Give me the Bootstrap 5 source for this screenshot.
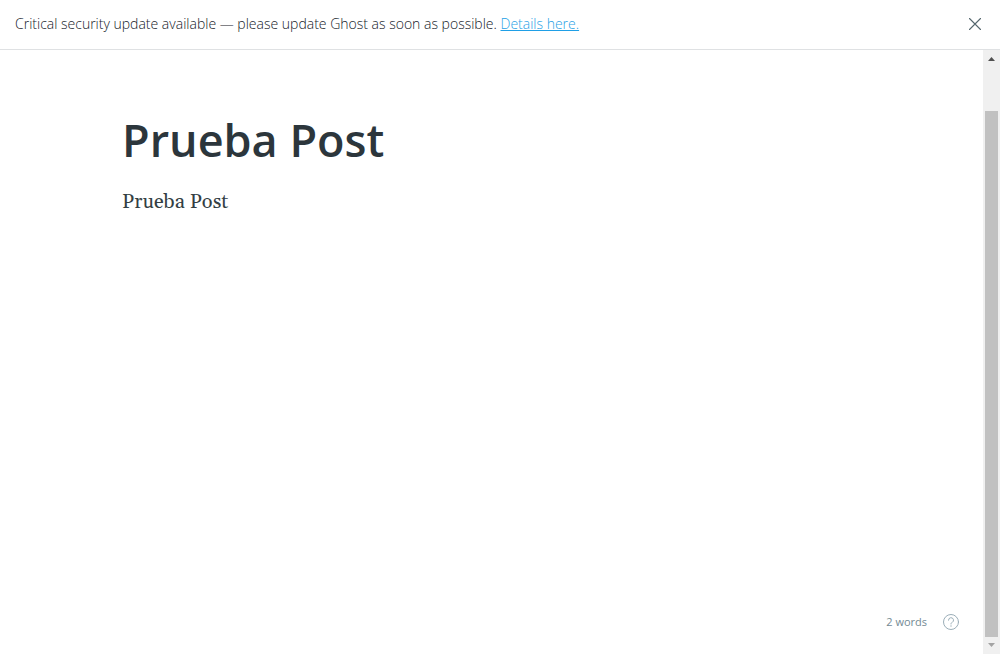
<!DOCTYPE html>
<html lang="en">
<head>
<meta charset="utf-8">
<meta name="viewport" content="width=device-width, initial-scale=1">
<title>Prueba Post - Ghost</title>
<link href="https://cdn.jsdelivr.net/npm/bootstrap@5.3.0/dist/css/bootstrap.min.css" rel="stylesheet">
<style>
  body { font-family: "Open Sans", "Noto Sans", sans-serif; color: #343f44; background: #fff; }
  .notice { font-size: 14px; font-weight: 300; line-height: 20px; padding: 14px 15px 15px; color: #15212a; border-bottom: 1px solid #dfe1e3; }
  .notice a { color: #1f9fe6; }
  .icon-btn { line-height: 0; color: #54666d; }
  .help-btn { color: #9baeb8; }
  .editor { padding: 60px 122px 0; }
  .post-title { font-size: 45px; font-weight: 600; line-height: 60px; height: 60px; color: #2c363c; resize: none; overflow: hidden; outline: 0; }
  .post-body { font-family: Gelasio, Georgia, "Noto Serif", "Liberation Serif", serif; font-size: 20px; line-height: 32px; margin-top: 16px; outline: 0; }
  .status { font-size: 11px; line-height: 18px; color: #738a94; padding: 0 24px 23px; }
  .scroll-track { width: 17px; background: #f0f0f0; }
  .scroll-step { height: 17px; line-height: 0; padding-left: 5px; }
  .scroll-thumb { width: 13px; background: #c1c1c1; }
</style>
</head>
<body class="vh-100 d-flex flex-column overflow-hidden">
  <header class="notice d-flex justify-content-between align-items-center">
    <div>Critical security update available — please update Ghost as soon as possible. <a href="#">Details here.</a></div>
    <button type="button" class="icon-btn btn border-0 p-0 me-1" aria-label="Close notification">
      <svg width="12" height="12" viewBox="0 0 12 12" fill="none" stroke="currentColor" stroke-width="1.1" stroke-linecap="round"><path d="M.5.5l11 11M11.5.5l-11 11"/></svg>
    </button>
  </header>
  <div class="d-flex flex-grow-1">
    <main class="d-flex flex-column flex-grow-1">
      <div class="editor flex-grow-1">
        <textarea class="post-title d-block w-100 border-0 p-0 bg-transparent" rows="1" aria-label="Post title" spellcheck="false">Prueba Post</textarea>
        <div class="post-body" contenteditable="true" role="textbox" aria-label="Post content" spellcheck="false">Prueba Post</div>
      </div>
      <footer class="status d-flex justify-content-end align-items-center gap-3">
        <span>2 words</span>
        <button type="button" class="icon-btn help-btn btn border-0 p-0" aria-label="Help">
          <svg width="16" height="16" viewBox="0 0 16 16" fill="none" stroke="currentColor" stroke-linecap="round" stroke-linejoin="round"><circle cx="8" cy="8" r="7.5"/><path d="M5.500 6.200a2.500 2.500 0 1 1 3.700 2.200C8.300 8.900 8 9.200 8 10"/><circle cx="8" cy="12" r=".7" fill="currentColor" stroke="none"/></svg>
        </button>
      </footer>
    </main>
    <div class="scroll-track d-flex flex-column" aria-hidden="true">
      <div class="scroll-step"><svg width="7" height="17" viewBox="0 0 7 17"><path d="M0 11l3.500-4L7 11z" fill="#505050"/></svg></div>
      <div class="d-flex flex-grow-1 align-items-end justify-content-center"><div class="scroll-thumb" style="height:92.3%"></div></div>
      <div class="scroll-step"><svg width="7" height="17" viewBox="0 0 7 17"><path d="M0 6l3.500 4L7 6z" fill="#a3a3a3"/></svg></div>
    </div>
  </div>
<script src="https://cdn.jsdelivr.net/npm/bootstrap@5.3.0/dist/js/bootstrap.bundle.min.js"></script>
</body>
</html>
